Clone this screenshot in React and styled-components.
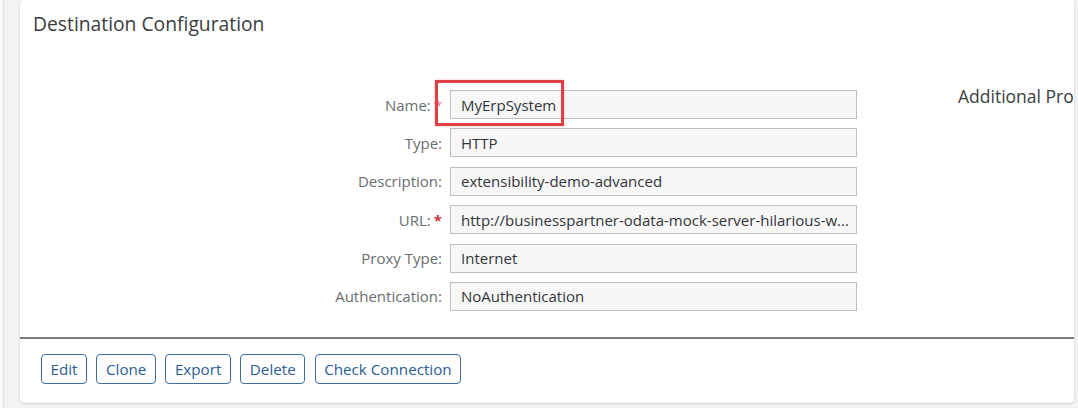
import React from 'react';
import styled, { createGlobalStyle } from 'styled-components';

const GlobalStyle = createGlobalStyle`
  html, body {
    margin: 0;
    padding: 0;
    background: #f3f3f3;
    font-family: "Open Sans", "Noto Sans", Arial, sans-serif;
    overflow: hidden;
  }
`;

const Page = styled.div`
  width: 1078px;
  height: 408px;
  box-sizing: border-box;
  padding-left: 20px;
  background: linear-gradient(to right, #fafafa 0 3px, #e3e3e3 3px 4px, #f3f3f3 4px);
`;

const Card = styled.section`
  width: 1054px;
  height: 403px;
  box-sizing: border-box;
  background: #fff;
  border-radius: 4px;
  border-top-right-radius: 0;
  box-shadow: 0 0 2px rgba(0, 0, 0, 0.15), 0 1px 2px rgba(0, 0, 0, 0.1);
  display: flex;
  flex-direction: column;
`;

const Title = styled.h1`
  margin: 0;
  padding: 11px 13px 0;
  height: 81px;
  box-sizing: border-box;
  font-size: 19.3px;
  line-height: 25px;
  font-weight: 400;
  color: #3a3d40;
`;

const Body = styled.div`
  display: flex;
  align-items: flex-start;
  height: 256px;
`;

const Form = styled.div`
  display: grid;
  grid-template-columns: 422px 407px;
  column-gap: 8px;
  row-gap: 9.4px;
  padding-top: 9px;
`;

const Label = styled.div`
  display: flex;
  justify-content: flex-end;
  align-items: center;
  font-size: 15px;
  color: #6a6d70;
  white-space: nowrap;
`;

const Star = styled.span`
  color: #d0303a;
  margin-left: 3px;
  font-weight: 700;
  opacity: ${p => (p.$faded ? 0.55 : 1)};
`;

const Field = styled.div`
  position: relative;
  height: 29px;
  box-sizing: border-box;
  border: 1px solid #bfbfbf;
  background: #f7f7f7;
  padding: 0 10px;
  display: flex;
  align-items: center;
  font-size: 15px;
  color: #32363a;
  white-space: nowrap;
`;

const Highlight = styled.div`
  position: absolute;
  left: -16px;
  top: -11px;
  width: 129px;
  height: 46px;
  box-sizing: border-box;
  border: 3px solid #df3f45;
  box-shadow: 0 0 2px rgba(223, 63, 69, 0.4);
  pointer-events: none;
`;

const Side = styled.div`
  margin-left: 101px;
  padding-top: 3px;
  font-size: 17.5px;
  color: #3a3d40;
  white-space: nowrap;
`;

const Divider = styled.hr`
  margin: 0;
  border: none;
  height: 2px;
  background: #7a7a7a;
`;

const Footer = styled.div`
  display: flex;
  gap: 9.5px;
  padding: 15px 21px 0;
`;

const Button = styled.button`
  height: 30px;
  padding: 0 8.5px;
  border: 1px solid #3d6da3;
  border-radius: 4px;
  background: #fff;
  color: #2b5c94;
  font-family: inherit;
  font-size: 15.2px;
  cursor: pointer;
`;

const fields = [
  { label: 'Name:', value: 'MyErpSystem', required: true, highlight: true },
  { label: 'Type:', value: 'HTTP' },
  { label: 'Description:', value: 'extensibility-demo-advanced' },
  { label: 'URL:', value: 'http://businesspartner-odata-mock-server-hilarious-w...', required: true },
  { label: 'Proxy Type:', value: 'Internet' },
  { label: 'Authentication:', value: 'NoAuthentication' }
];

const actions = ['Edit', 'Clone', 'Export', 'Delete', 'Check Connection'];

export default function App() {
  return (
    <Page>
      <GlobalStyle />
      <Card>
        <Title>Destination Configuration</Title>
        <Body>
          <Form>
            {fields.map(f => (
              <React.Fragment key={f.label}>
                <Label>
                  {f.label}
                  {f.required && <Star $faded={f.highlight}>*</Star>}
                </Label>
                <Field>
                  {f.value}
                  {f.highlight && <Highlight />}
                </Field>
              </React.Fragment>
            ))}
          </Form>
          <Side>Additional Pro</Side>
        </Body>
        <Divider />
        <Footer>
          {actions.map(a => (
            <Button key={a} type="button">
              {a}
            </Button>
          ))}
        </Footer>
      </Card>
    </Page>
  );
}
